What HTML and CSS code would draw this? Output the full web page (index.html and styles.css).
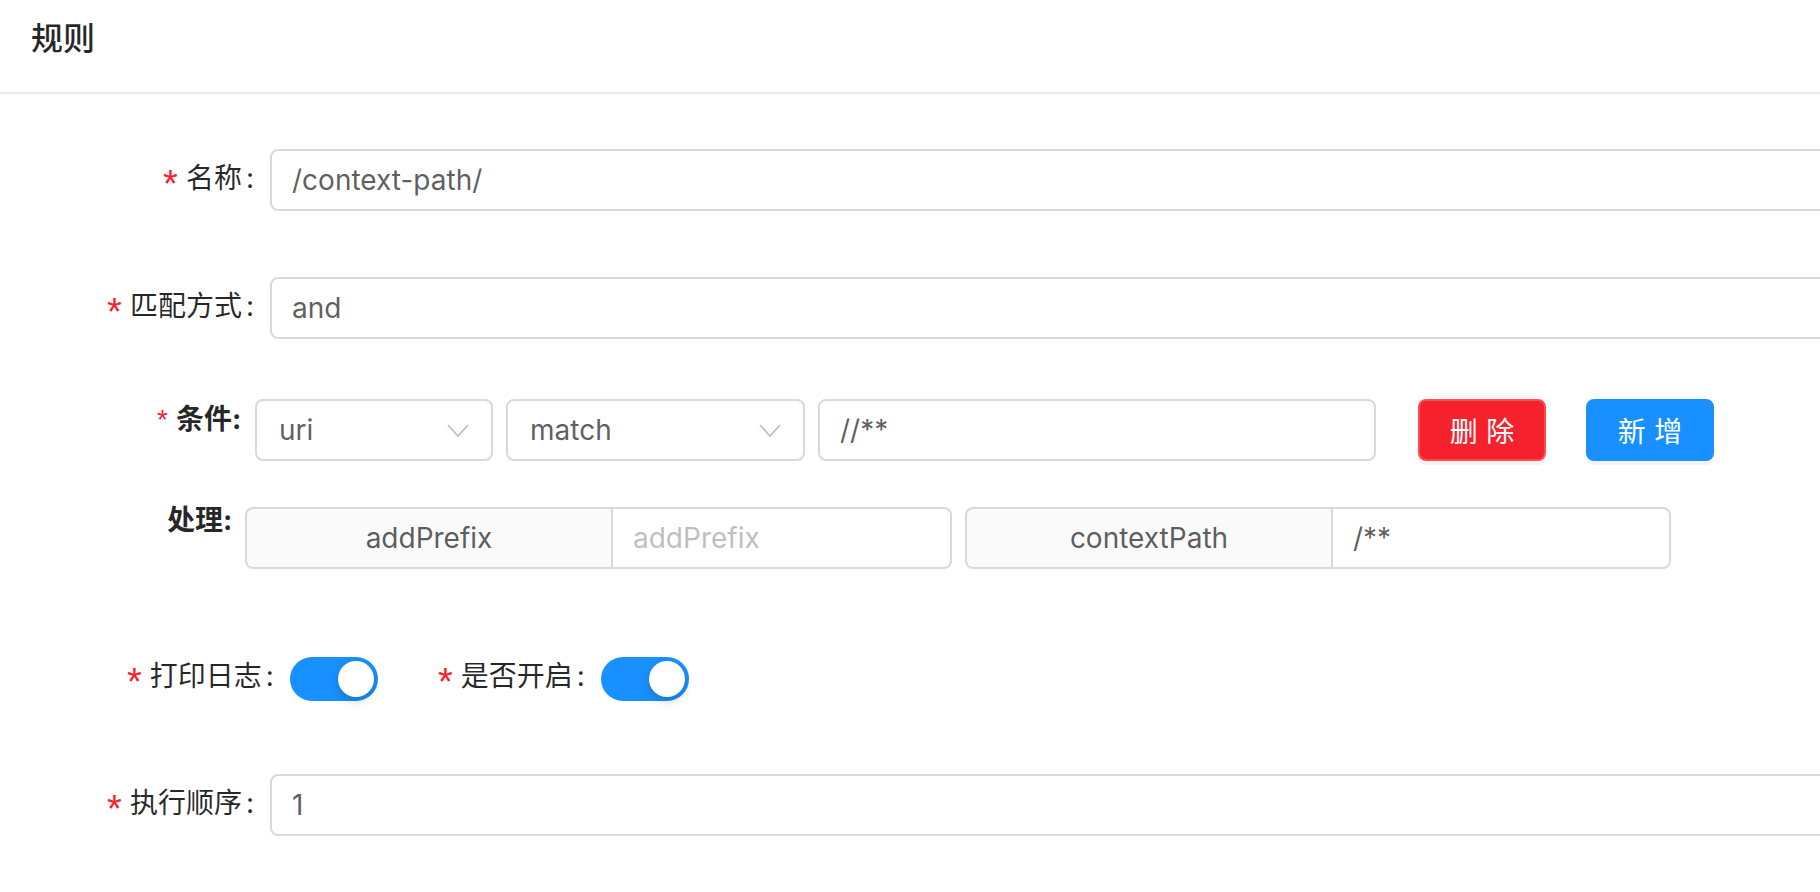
FILE: index.html
```html
<!DOCTYPE html>
<html lang="zh-CN">
<head>
<meta charset="utf-8">
<title>规则</title>
<link rel="stylesheet" href="styles.css">
</head>
<body>
<div class="card">
  <div class="card-head"><div class="card-title">规则</div></div>
  <div class="card-body">
    <div class="form-row row-name">
      <div class="label-col"><span class="req">*</span>名称<span class="colon">:</span></div>
      <div class="input wide">/context-path/</div>
    </div>

    <div class="form-row row-match">
      <div class="label-col"><span class="req">*</span>匹配方式<span class="colon">:</span></div>
      <div class="input wide">and</div>
    </div>

    <div class="cond-row">
      <div class="cond-label"><span class="req-s">*</span>条件:</div>
      <div class="fields">
        <div class="input select sel-uri"><span>uri</span>
          <svg class="arrow" width="22" height="13" viewBox="0 0 22 13"><polyline points="1,1 11,12 21,1" fill="none" stroke="#bfbfbf" stroke-width="1.8"/></svg>
        </div>
        <div class="input select sel-match"><span>match</span>
          <svg class="arrow" width="22" height="13" viewBox="0 0 22 13"><polyline points="1,1 11,12 21,1" fill="none" stroke="#bfbfbf" stroke-width="1.8"/></svg>
        </div>
        <div class="input cond-input">//**</div>
      </div>
      <div class="btns">
        <div class="btn btn-danger">删 除</div>
        <div class="btn btn-primary">新 增</div>
      </div>
    </div>

    <div class="proc-row">
      <div class="proc-label">处理:</div>
      <div class="group">
        <div class="addon">addPrefix</div>
        <div class="input grp-input placeholder">addPrefix</div>
      </div>
      <div class="group group-2">
        <div class="addon">contextPath</div>
        <div class="input grp-input grp-input-2">/**</div>
      </div>
    </div>

    <div class="switch-row">
      <div class="sw-item">
        <div class="sw-label"><span class="req">*</span>打印日志<span class="colon">:</span></div>
        <div class="switch"><span class="knob"></span></div>
      </div>
      <div class="sw-item sw-item-2">
        <div class="sw-label"><span class="req">*</span>是否开启<span class="colon">:</span></div>
        <div class="switch"><span class="knob"></span></div>
      </div>
    </div>

    <div class="form-row row-order">
      <div class="label-col"><span class="req">*</span>执行顺序<span class="colon">:</span></div>
      <div class="input wide">1</div>
    </div>
  </div>
</div>
</body>
</html>
```
FILE: styles.css
```css
html, body {
  margin: 0;
  padding: 0;
  background: #fff;
  overflow: hidden;
}
body {
  width: 1820px;
  height: 892px;
  font-family: Inter, "Noto Sans CJK SC", sans-serif;
  font-size: 28px;
  color: rgba(0, 0, 0, 0.65);
}
.card-head {
  box-sizing: border-box;
  height: 94px;
  padding: 14px 0 0 31px;
  border-bottom: 2px solid #e8e8e8;
}
.card-title {
  font-family: "Noto Sans CJK SC", sans-serif;
  font-size: 32px;
  line-height: 44px;
  font-weight: 500;
  color: rgba(0, 0, 0, 0.85);
}
.form-row {
  display: flex;
  align-items: center;
}
.row-name { margin-top: 55px; }
.row-match { margin-top: 66px; }
.row-order { margin-top: 73px; }
.label-col {
  width: 270px;
  flex: none;
  text-align: right;
  line-height: 40px;
  white-space: nowrap;
  color: rgba(0, 0, 0, 0.85);
}
.colon { margin: 0 16px 0 4px; }
.req {
  color: #f5222d;
  font-family: "Liberation Sans", sans-serif;
  font-size: 38px;
  line-height: 1;
  margin-right: 8px;
  vertical-align: -9px;
}
.req-s {
  color: #f5222d;
  font-family: "Liberation Sans", sans-serif;
  font-size: 28px;
  font-weight: normal;
  margin-right: 8px;
}
.input {
  box-sizing: border-box;
  height: 62px;
  border: 2px solid #d9d9d9;
  border-radius: 8px;
  padding: 0 20px;
  display: flex;
  align-items: center;
  background: #fff;
  color: rgba(0, 0, 0, 0.65);
  white-space: nowrap;
  flex: none;
}
.input.wide { width: 1600px; }
.select {
  justify-content: space-between;
  padding: 0 22px 0 22px;
}
.arrow { display: block; flex: none; }
.cond-row {
  display: flex;
  align-items: flex-start;
  margin-top: 60px;
  padding-left: 157px;
}
.cond-label {
  width: 98px;
  flex: none;
  line-height: 40px;
  font-weight: 700;
  color: rgba(0, 0, 0, 0.85);
  white-space: nowrap;
}
.fields {
  display: flex;
  gap: 13px;
}
.sel-uri { width: 238px; }
.sel-match { width: 299px; }
.cond-input { width: 558px; }
.btns {
  display: flex;
  gap: 40px;
  margin-left: 42px;
}
.btn {
  box-sizing: border-box;
  width: 128px;
  height: 62px;
  border-radius: 8px;
  color: #fff;
  display: flex;
  align-items: center;
  justify-content: center;
  box-shadow: 0 4px 0 rgba(0, 0, 0, 0.045);
  font-family: "Noto Sans CJK SC", sans-serif;
  font-size: 28px;
  white-space: pre;
  word-spacing: 2px;
}
.btn-danger {
  background: #f5222d;
  border: 2px solid #ff4d4f;
}
.btn-primary {
  background: #1890ff;
  border: 2px solid #1890ff;
}
.proc-row {
  display: flex;
  align-items: flex-start;
  margin-top: 46px;
  padding-left: 167px;
}
.proc-label {
  width: 78px;
  flex: none;
  line-height: 26px;
  font-weight: 700;
  color: rgba(0, 0, 0, 0.85);
  white-space: nowrap;
}
.group { display: flex; flex: none; }
.group-2 { margin-left: 13px; }
.addon {
  box-sizing: border-box;
  width: 366px;
  height: 62px;
  border: 2px solid #d9d9d9;
  border-right: 0;
  border-radius: 8px 0 0 8px;
  background: #fafafa;
  display: flex;
  align-items: center;
  justify-content: center;
  color: rgba(0, 0, 0, 0.65);
}
.grp-input {
  width: 341px;
  border-radius: 0 8px 8px 0;
}
.grp-input-2 { width: 340px; }
.placeholder { color: #bfbfbf; }
.switch-row {
  display: flex;
  align-items: center;
  margin-top: 87px;
  padding-left: 127px;
}
.sw-item {
  display: flex;
  align-items: center;
}
.sw-item-2 { margin-left: 60px; }
.sw-label {
  line-height: 40px;
  white-space: nowrap;
  color: rgba(0, 0, 0, 0.85);
}
.switch {
  position: relative;
  width: 88px;
  height: 44px;
  border-radius: 22px;
  background: #1890ff;
  flex: none;
}
.knob {
  position: absolute;
  top: 4px;
  right: 4px;
  width: 36px;
  height: 36px;
  border-radius: 50%;
  background: #fff;
  box-shadow: 0 4px 8px rgba(0, 35, 11, 0.2);
}
```
